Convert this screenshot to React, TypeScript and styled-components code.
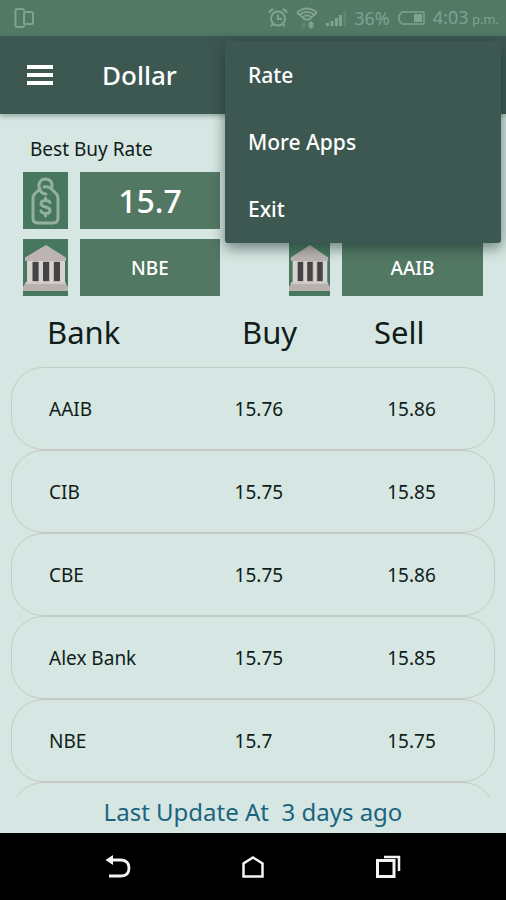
import React from "react";
import styled, { createGlobalStyle } from "styled-components";

const GlobalStyle = createGlobalStyle`
  *, *::before, *::after { box-sizing: border-box; }
  body { margin: 0; background: #d6e6e2; }
  button { font: inherit; color: inherit; background: none; border: 0; padding: 0; cursor: pointer; }
`;

const Screen = styled.div`
  display: flex;
  flex-direction: column;
  height: 100vh;
  background: #d6e6e2;
  color: #101c1a;
  font-family: "Noto Sans", "Open Sans", sans-serif;
`;

const StatusBar = styled.div`
  display: flex;
  align-items: center;
  flex: none;
  height: 36px;
  padding: 0 7px 0 14px;
  background: #527966;
  color: #80a290;
  font-size: 18px;
  line-height: 24px;
`;

const StatusIcons = styled.div`
  display: flex;
  align-items: center;
  gap: 8px;
  margin-left: auto;
`;

const Clock = styled.span`
  small { font-size: 13px; }
`;

const AppBar = styled.header`
  position: relative;
  z-index: 1;
  display: flex;
  align-items: center;
  flex: none;
  gap: 48px;
  height: 78px;
  padding: 0 26px;
  background: #3d5751;
  color: #fff;
  box-shadow: 0 2px 5px rgba(20, 50, 44, 0.35);
`;

const IconButton = styled.button`
  display: flex;
  align-items: center;
  justify-content: center;
`;

const Title = styled.h1`
  margin: 0;
  font-size: 26px;
  line-height: 32px;
  font-weight: 500;
`;

const Menu = styled.div`
  position: absolute;
  top: 5px;
  right: 5px;
  display: flex;
  flex-direction: column;
  width: 276px;
  padding-bottom: 1px;
  border-radius: 3px;
  background: #3d5751;
  box-shadow: 0 5px 14px rgba(20, 45, 40, 0.55);
`;

const MenuItem = styled.button`
  height: 67px;
  padding: 0 23px;
  text-align: left;
  font-size: 21px;
  line-height: 28px;
  font-weight: 500;
`;

const BestRates = styled.section`
  display: grid;
  grid-template-columns: 197fr 194fr;
  column-gap: 69px;
  align-items: end;
  flex: none;
  padding: 23px 23px 12px;
`;

const RateCard = styled.div<{ $icon: number }>`
  display: grid;
  grid-template-columns: ${(p) => p.$icon}px 1fr;
  gap: 10px 12px;
`;

const RateLabel = styled.h2`
  grid-column: 1 / -1;
  margin: 0;
  padding-left: 7px;
  font-size: 19px;
  line-height: 25px;
  font-weight: 400;
`;

const IconTile = styled.div`
  display: flex;
  align-items: center;
  justify-content: center;
  height: 57px;
  background: #487760;
  svg { width: 100%; height: 100%; }
`;

const ValueTile = styled.div<{ $large?: boolean }>`
  display: flex;
  align-items: center;
  justify-content: center;
  height: 57px;
  background: #527763;
  color: #fff;
  font-size: ${(p) => (p.$large ? 32 : 19)}px;
  font-weight: 500;
`;

const RateTable = styled.table`
  display: flex;
  flex-direction: column;
  flex: 1;
  min-height: 0;
  padding: 0 11px;
  overflow: hidden;
  tbody { display: block; }
`;

const HeadRow = styled.tr`
  display: grid;
  grid-template-columns: 195fr 132fr 121fr;
  height: 59px;
  padding: 3px 0 0 36px;
`;

const HeadCell = styled.th`
  padding: 0;
  text-align: left;
  font-size: 31px;
  line-height: 42px;
  font-weight: 400;
`;

const BankRow = styled.tr`
  display: grid;
  grid-template-columns: 186fr 153fr 107fr;
  align-items: center;
  height: 83px;
  padding-left: 37px;
  border: 1px solid #c4cac8;
  border-radius: 32px;
`;

const Cell = styled.td`
  padding: 0;
  font-size: 19px;
  line-height: 26px;
`;

const Footer = styled.p`
  flex: none;
  margin: 0;
  height: 36px;
  text-align: center;
  white-space: pre;
  color: #1b6480;
  font-size: 24px;
  line-height: 30px;
`;

const NavBar = styled.nav`
  display: flex;
  align-items: center;
  justify-content: center;
  gap: 107px;
  flex: none;
  height: 67px;
  background: #000;
`;

const DevicesIcon = () => (
  <svg width="21" height="21" viewBox="0 0 21 21" fill="none" stroke="currentColor" strokeWidth="2">
    <path d="M10 3V2.500Q10 1 8.500 1H3Q1.500 1 1.500 2.500V17.500Q1.500 19 3 19H8.500Q10 19 10 17.500V17" />
    <rect x="10" y="4" width="9" height="12" rx="1.500" />
  </svg>
);

const AlarmIcon = () => (
  <svg width="20" height="20" viewBox="0 0 20 20" fill="none" stroke="currentColor" strokeWidth="2">
    <circle cx="10" cy="10.500" r="7" />
    <path d="M10 6.500V11h4M5 16l-2 2.500M15 16l2 2.500M1.500 5Q1.500 1.500 5.500 1.500M18.500 5Q18.500 1.500 14.500 1.500" />
  </svg>
);

const WifiIcon = () => (
  <svg width="22" height="23" viewBox="0 0 22 23" fill="none" stroke="currentColor" strokeWidth="1.800">
    <path d="M1 5.500Q11-2.500 21 5.500M3.500 8Q11 1.500 18.500 8M6.500 10.500Q11 6 15.500 10.500M1 5.500L9 12.500H13L21 5.500" />
    <path d="M15 14l3.500 3.500h-2v1h2L15 22l-3.500-3.500h2v-1h-2z" fill="currentColor" stroke="none" />
    <path d="M7.500 15v6" strokeWidth="3" strokeOpacity=".3" />
  </svg>
);

const SignalIcon = () => (
  <svg width="20" height="16" viewBox="0 0 20 16" fill="currentColor">
    <path d="M0 13h3v3H0zM4.500 11h3v5h-3zM9 8h3v8H9zM13 5h3v11h-3z" />
    <path d="M17.500 1H20v15h-2.500z" opacity=".3" />
  </svg>
);

const BatteryIcon = () => (
  <svg width="27" height="14" viewBox="0 0 27 14" fill="none" stroke="currentColor" strokeWidth="1.500">
    <path d="M4 1h21q1 0 1 1v10q0 1-1 1H4L1 9.500V4.500z" />
    <path d="M16 3h8v8h-8z" fill="currentColor" stroke="none" />
  </svg>
);

const MenuIcon = () => (
  <svg width="28" height="20" viewBox="0 0 28 20" fill="#fff">
    <path d="M1 0h26v4H1zM1 8h26v4H1zM1 16h26v4H1z" />
  </svg>
);

const PriceTagIcon = () => (
  <svg viewBox="0 0 45 57" fill="none" stroke="#94b09f" strokeWidth="3" strokeLinecap="round" strokeLinejoin="round">
    <path d="M16.500 17C14.500 11 18 7 22.500 7C27 7 30.500 11 28.500 15.500" />
    <path d="M23 22Q18 22 17 17L11.500 22Q10 24 10 27V46Q10 51 15 51H30Q35 51 35 46V27Q35 24 33.500 22L28 16.500Q25 14 21 15" />
    <path d="M27 30.500Q26 28.500 22.500 28.500Q18 28.500 18 31.500Q18 34 22.500 35Q27 36 27 38.500Q27 41.500 22.500 41.500Q19 41.500 18 39M22.500 26v2.500M22.500 41.500V44" />
  </svg>
);

const BankIcon = () => (
  <svg viewBox="0 0 45 57" preserveAspectRatio="none">
    <path d="M5 22h36v22H5z" fill="#bdb7b6" />
    <path d="M23 6L43 18.500V22H2v-3.500z" fill="#bcb4b4" />
    <path d="M4 22h6v21H4zM16 22h4v21h-4zM27 22h3v21h-3zM37 22h5v21h-5z" fill="#d7d3d1" />
    <path d="M9.500 23h6v19h-6zM20 23h6v19h-6zM31 23h6v19h-6z" fill="#434443" />
    <path d="M3 43h39l3 5v4H0v-4z" fill="#b9b0b0" />
    <path d="M3 43h39l1 2H2z" fill="#d0c9c8" />
  </svg>
);

const BackIcon = () => (
  <svg width="28" height="26" viewBox="0 0 28 26" fill="none" stroke="#f4f4f4" strokeWidth="2.800">
    <path d="M7 6H17Q25 6.500 25 14Q25 22 17 22H5" />
    <path d="M9 1V11L1.500 6z" fill="#f4f4f4" stroke="none" />
  </svg>
);

const HomeIcon = () => (
  <svg width="28" height="26" viewBox="0 0 28 26" fill="none" stroke="#f4f4f4" strokeWidth="2.500">
    <path d="M14 3.500L23.500 9.500V22.500H4.500V9.500z" />
  </svg>
);

const RecentsIcon = () => (
  <svg width="28" height="26" viewBox="0 0 28 26" fill="none" stroke="#f4f4f4" strokeWidth="2.500">
    <path d="M3.500 6.500H20V22.500H3.500z" strokeWidth="3" />
    <path d="M10 3H25V17" />
  </svg>
);

const menuItems = ["Rate", "More Apps", "Exit"];

const rates = [
  { bank: "AAIB", buy: "15.76", sell: "15.86" },
  { bank: "CIB", buy: "15.75", sell: "15.85" },
  { bank: "CBE", buy: "15.75", sell: "15.86" },
  { bank: "Alex Bank", buy: "15.75", sell: "15.85" },
  { bank: "NBE", buy: "15.7", sell: "15.75" },
];

export default function App() {
  return (
    <Screen>
      <GlobalStyle />
      <StatusBar>
        <DevicesIcon />
        <StatusIcons>
          <AlarmIcon />
          <WifiIcon />
          <SignalIcon />
          <span>36%</span>
          <BatteryIcon />
          <Clock>
            4:03<small> p.m.</small>
          </Clock>
        </StatusIcons>
      </StatusBar>
      <AppBar>
        <IconButton aria-label="Open navigation">
          <MenuIcon />
        </IconButton>
        <Title>Dollar</Title>
        <Menu role="menu">
          {menuItems.map((item) => (
            <MenuItem key={item} role="menuitem">
              {item}
            </MenuItem>
          ))}
        </Menu>
      </AppBar>
      <BestRates>
        <RateCard $icon={45}>
          <RateLabel>Best Buy Rate</RateLabel>
          <IconTile>
            <PriceTagIcon />
          </IconTile>
          <ValueTile $large>15.7</ValueTile>
          <IconTile>
            <BankIcon />
          </IconTile>
          <ValueTile>NBE</ValueTile>
        </RateCard>
        <RateCard $icon={41}>
          <IconTile>
            <BankIcon />
          </IconTile>
          <ValueTile>AAIB</ValueTile>
        </RateCard>
      </BestRates>
      <RateTable>
        <thead>
          <HeadRow>
            <HeadCell scope="col">Bank</HeadCell>
            <HeadCell scope="col">Buy</HeadCell>
            <HeadCell scope="col">Sell</HeadCell>
          </HeadRow>
        </thead>
        <tbody>
          {rates.map((rate) => (
            <BankRow key={rate.bank}>
              <Cell>{rate.bank}</Cell>
              <Cell>{rate.buy}</Cell>
              <Cell>{rate.sell}</Cell>
            </BankRow>
          ))}
          <BankRow aria-hidden="true" />
        </tbody>
      </RateTable>
      <Footer>{"Last Update At  3 days ago"}</Footer>
      <NavBar aria-label="System">
        <IconButton aria-label="Back">
          <BackIcon />
        </IconButton>
        <IconButton aria-label="Home">
          <HomeIcon />
        </IconButton>
        <IconButton aria-label="Recent apps">
          <RecentsIcon />
        </IconButton>
      </NavBar>
    </Screen>
  );
}
